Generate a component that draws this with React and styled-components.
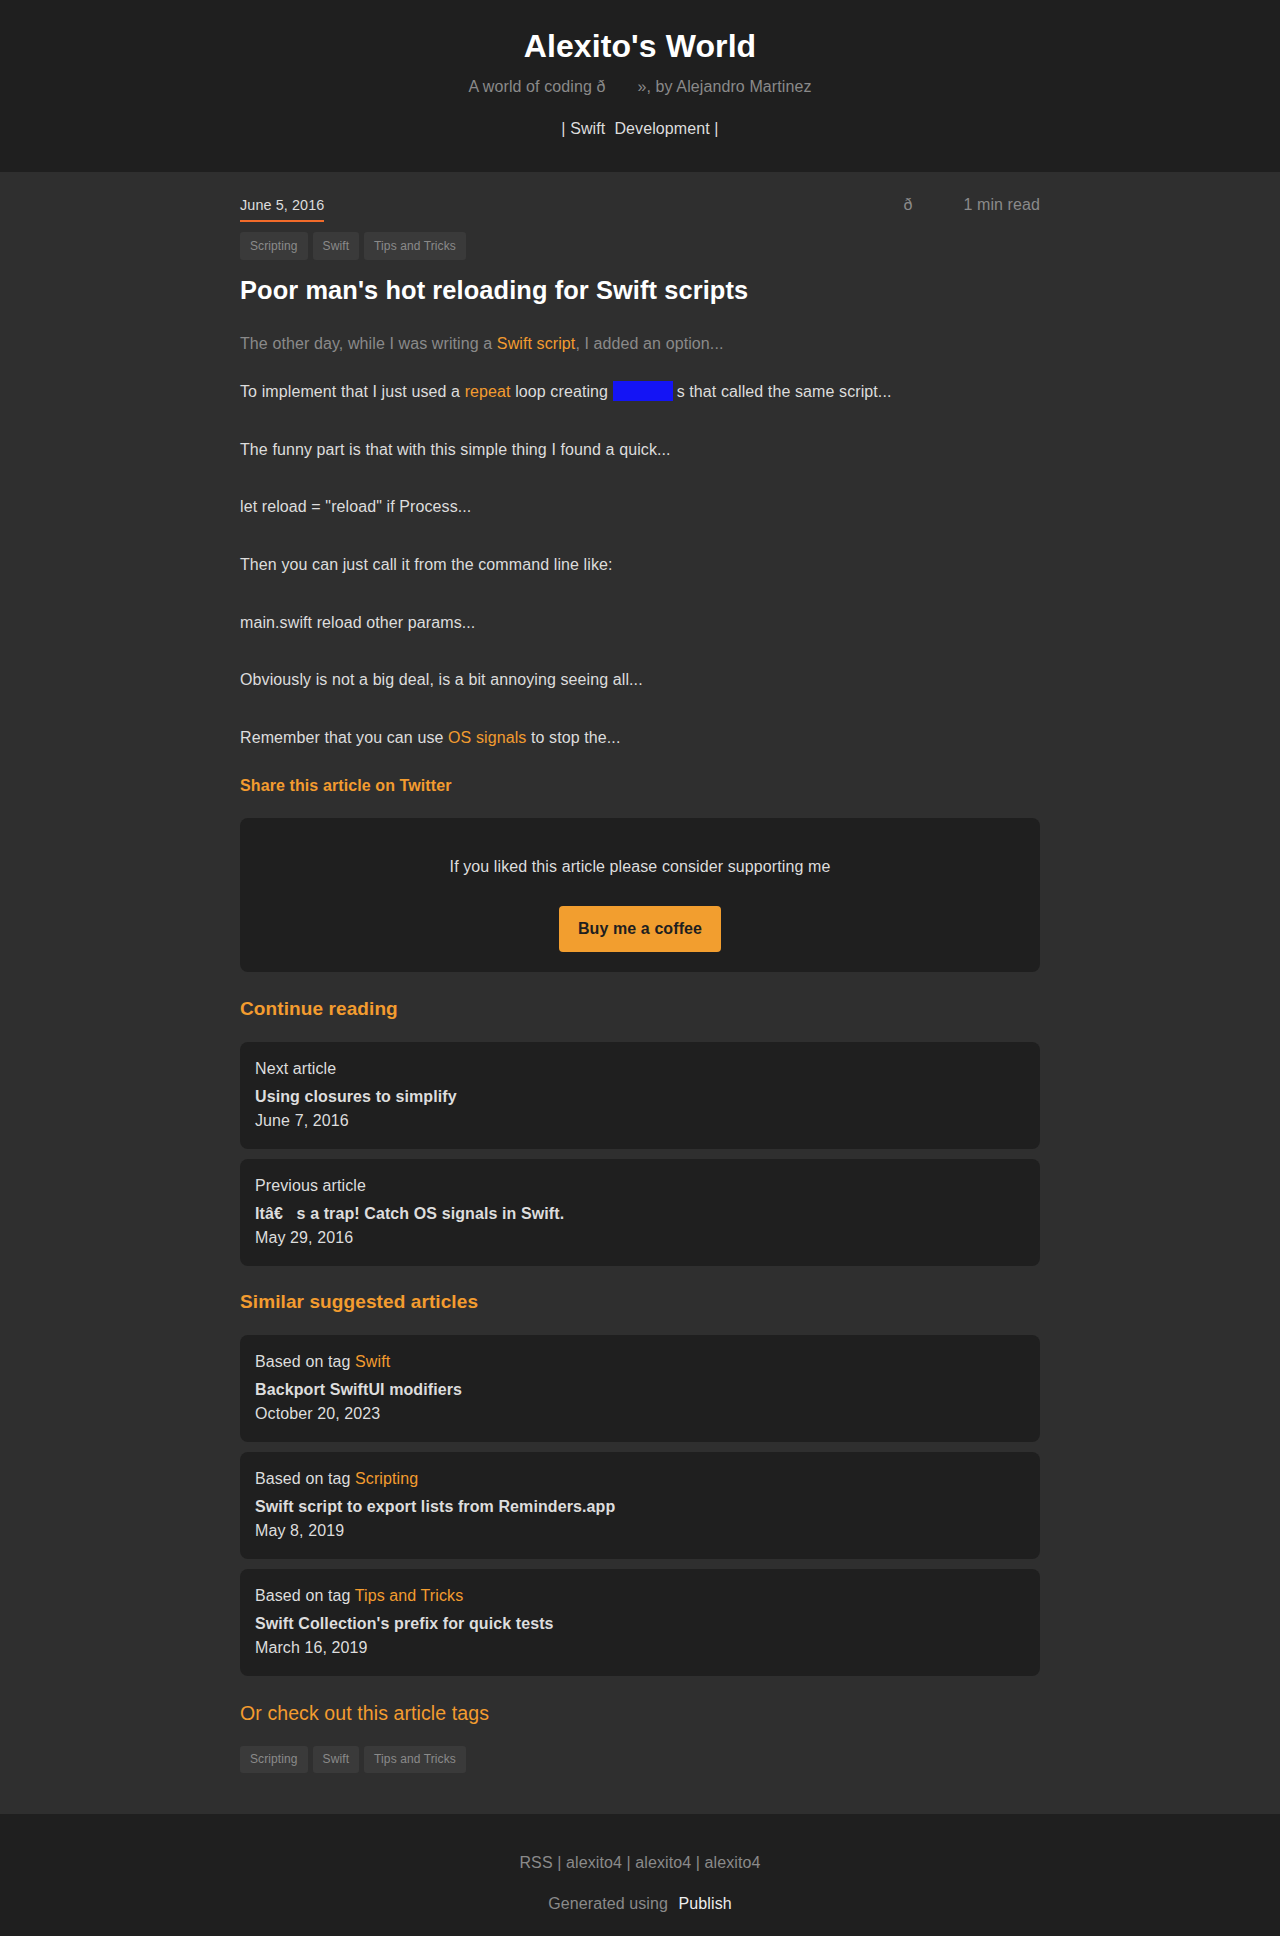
import React from 'react';
import styled, { createGlobalStyle } from 'styled-components';

const orange = '#f39c2f';

const GlobalStyle = createGlobalStyle`
  html, body {
    margin: 0;
    padding: 0;
    background: #2f2f2f;
  }
  body {
    font-family: "Liberation Sans", Arial, Helvetica, sans-serif;
    color: #dddddd;
    letter-spacing: 0.1px;
    -webkit-font-smoothing: antialiased;
  }
  * {
    box-sizing: border-box;
  }
`;

const Header = styled.header`
  background: #1f1f1f;
  height: 172px;
  padding-top: 27px;
  text-align: center;
`;

const SiteTitle = styled.h1`
  margin: 0;
  font-size: 32px;
  line-height: 38px;
  font-weight: 700;
  color: #fff;
`;

const Subtitle = styled.p`
  margin: 12px 0 0;
  font-size: 16px;
  line-height: 20px;
  color: #8a8a8a;
`;

const Gap = styled.span`
  display: inline-block;
  width: ${(p) => p.$w}px;
`;

const Nav = styled.nav`
  margin-top: 22px;
  font-size: 16px;
  line-height: 20px;
  color: #dddddd;
`;

const NavLink = styled.a`
  color: #dddddd;
  text-decoration: none;
  white-space: pre;
`;

const Main = styled.main`
  width: 800px;
  margin: 0 auto;
  padding: 24px 0 41px;
`;

const MetaRow = styled.div`
  display: flex;
  justify-content: space-between;
  align-items: flex-start;
`;

const DateLabel = styled.span`
  font-size: 14.4px;
  line-height: 18px;
  padding-bottom: 6px;
  border-bottom: 2px solid #f26b2a;
  color: #dddddd;
`;

const ReadTime = styled.span`
  font-size: 16px;
  line-height: 18px;
  color: #8a8a8a;
`;

const TagList = styled.ul`
  display: flex;
  gap: 5px;
  list-style: none;
  margin: ${(p) => p.$mt}px 0 0;
  padding: 0;
`;

const Tag = styled.li`
  background: #3a3a3a;
  color: #8a8a8a;
  font-size: 12px;
  height: ${(p) => p.$h || 28}px;
  line-height: ${(p) => p.$h || 28}px;
  padding: 0 10px;
  border-radius: 3px;
`;

const PostTitle = styled.h2`
  margin: 15px 0 0;
  font-size: 25.4px;
  line-height: 30px;
  font-weight: 700;
  color: #fff;
`;

const Intro = styled.p`
  margin: 27px 0 24px;
  font-size: 16px;
  line-height: 24px;
  color: #8a8a8a;
`;

const Para = styled.p`
  margin: 0 0 33.7px;
  font-size: 16px;
  line-height: 24px;
  color: #dddddd;
  &:last-of-type {
    margin-bottom: 0;
  }
`;

const Link = styled.a`
  color: ${orange};
  text-decoration: none;
`;

const Redacted = styled.code`
  display: inline-block;
  width: 60px;
  height: 20px;
  vertical-align: -4px;
  background: #1414f5;
  color: #1414f5;
  margin-right: 4px;
  overflow: hidden;
  font-family: "Liberation Mono", monospace;
  font-size: 13px;
  line-height: 20px;
  text-align: center;
`;

const ShareLink = styled.a`
  display: block;
  margin-top: 24px;
  font-size: 16px;
  line-height: 24px;
  font-weight: 700;
  color: ${orange};
  text-decoration: none;
`;

const SupportBox = styled.section`
  margin-top: 20px;
  background: #1f1f1f;
  border-radius: 8px;
  padding: 37px 20px 20px;
  display: flex;
  flex-direction: column;
  align-items: center;
`;

const SupportText = styled.p`
  margin: 0;
  font-size: 16px;
  line-height: 24px;
  color: #dddddd;
`;

const CoffeeButton = styled.a`
  margin-top: 27px;
  width: 162px;
  height: 46px;
  display: flex;
  align-items: center;
  justify-content: center;
  background: #f29e2f;
  color: #1f1f1f;
  font-weight: 700;
  font-size: 16px;
  border-radius: 4px;
  text-decoration: none;
`;

const SectionTitle = styled.h3`
  margin: 24.5px 0 21px;
  font-size: ${(p) => (p.$light ? 19.5 : 19)}px;
  line-height: 24px;
  font-weight: ${(p) => (p.$light ? 400 : 700)};
  color: ${orange};
`;

const CardList = styled.div`
  display: flex;
  flex-direction: column;
  gap: 10px;
`;

const Card = styled.a`
  display: block;
  background: #1f1f1f;
  border-radius: 8px;
  padding: 15px 15px 16px;
  font-size: 16px;
  line-height: 24px;
  color: #dddddd;
  text-decoration: none;
`;

const CardLabel = styled.div``;

const CardTitle = styled.div`
  margin-top: 4px;
  font-weight: 700;
`;

const CardDate = styled.div``;

const Footer = styled.footer`
  background: #1f1f1f;
  height: 124px;
  padding-top: 39px;
  text-align: center;
  font-size: 16px;
  line-height: 20px;
  color: #8a8a8a;
`;

const FooterLine = styled.p`
  margin: 0 0 21px;
`;

const PublishLink = styled.a`
  color: #eeeeee;
  text-decoration: none;
  margin-left: 6px;
`;

const tags = ['Scripting', 'Swift', 'Tips and Tricks'];

const paragraphs = [
  <>
    To implement that I just used a <Link href="#">repeat</Link> loop creating{' '}
    <Redacted>Process</Redacted>s that called the same script...
  </>,
  'The funny part is that with this simple thing I found a quick...',
  'let reload = "reload" if Process...',
  'Then you can just call it from the command line like:',
  'main.swift reload other params...',
  'Obviously is not a big deal, is a bit annoying seeing all...',
  <>
    Remember that you can use <Link href="#">OS signals</Link> to stop the...
  </>
];

const continueReading = [
  { label: 'Next article', title: 'Using closures to simplify', date: 'June 7, 2016' },
  { label: 'Previous article', title: 'Itâ€\u00a0\u00a0\u00a0s a trap! Catch OS signals in Swift.', date: 'May 29, 2016' }
];

const suggested = [
  { tag: 'Swift', title: 'Backport SwiftUI modifiers', date: 'October 20, 2023' },
  { tag: 'Scripting', title: 'Swift script to export lists from Reminders.app', date: 'May 8, 2019' },
  { tag: 'Tips and Tricks', title: "Swift Collection's prefix for quick tests", date: 'March 16, 2019' }
];

export default function App() {
  return (
    <>
      <GlobalStyle />
      <Header>
        <SiteTitle>Alexito's World</SiteTitle>
        <Subtitle>
          A world of coding ð<Gap $w={32} />», by Alejandro Martinez
        </Subtitle>
        <Nav>
          |<NavLink href="#"> Swift  </NavLink>
          <NavLink href="#">Development </NavLink>|
        </Nav>
      </Header>

      <Main>
        <MetaRow>
          <DateLabel>June 5, 2016</DateLabel>
          <ReadTime>
            ð<Gap $w={51} />1 min read
          </ReadTime>
        </MetaRow>

        <TagList $mt={10}>
          {tags.map((t) => (
            <Tag key={t}>{t}</Tag>
          ))}
        </TagList>

        <PostTitle>Poor man's hot reloading for Swift scripts</PostTitle>

        <Intro>
          The other day, while I was writing a <Link href="#">Swift script</Link>, I added an option...
        </Intro>

        {paragraphs.map((p, i) => (
          <Para key={i}>{p}</Para>
        ))}

        <ShareLink href="#">Share this article on Twitter</ShareLink>

        <SupportBox>
          <SupportText>If you liked this article please consider supporting me</SupportText>
          <CoffeeButton href="#">Buy me a coffee</CoffeeButton>
        </SupportBox>

        <SectionTitle>Continue reading</SectionTitle>
        <CardList>
          {continueReading.map((c) => (
            <Card href="#" key={c.label}>
              <CardLabel>{c.label}</CardLabel>
              <CardTitle>{c.title}</CardTitle>
              <CardDate>{c.date}</CardDate>
            </Card>
          ))}
        </CardList>

        <SectionTitle>Similar suggested articles</SectionTitle>
        <CardList>
          {suggested.map((c) => (
            <Card href="#" key={c.title}>
              <CardLabel>
                Based on tag <Link as="span">{c.tag}</Link>
              </CardLabel>
              <CardTitle>{c.title}</CardTitle>
              <CardDate>{c.date}</CardDate>
            </Card>
          ))}
        </CardList>

        <SectionTitle $light>Or check out this article tags</SectionTitle>
        <TagList $mt={0}>
          {tags.map((t) => (
            <Tag key={t} $h={27}>
              {t}
            </Tag>
          ))}
        </TagList>
      </Main>

      <Footer>
        <FooterLine>RSS | alexito4 | alexito4 | alexito4</FooterLine>
        <FooterLine>
          Generated using <PublishLink href="#">Publish</PublishLink>
        </FooterLine>
      </Footer>
    </>
  );
}
